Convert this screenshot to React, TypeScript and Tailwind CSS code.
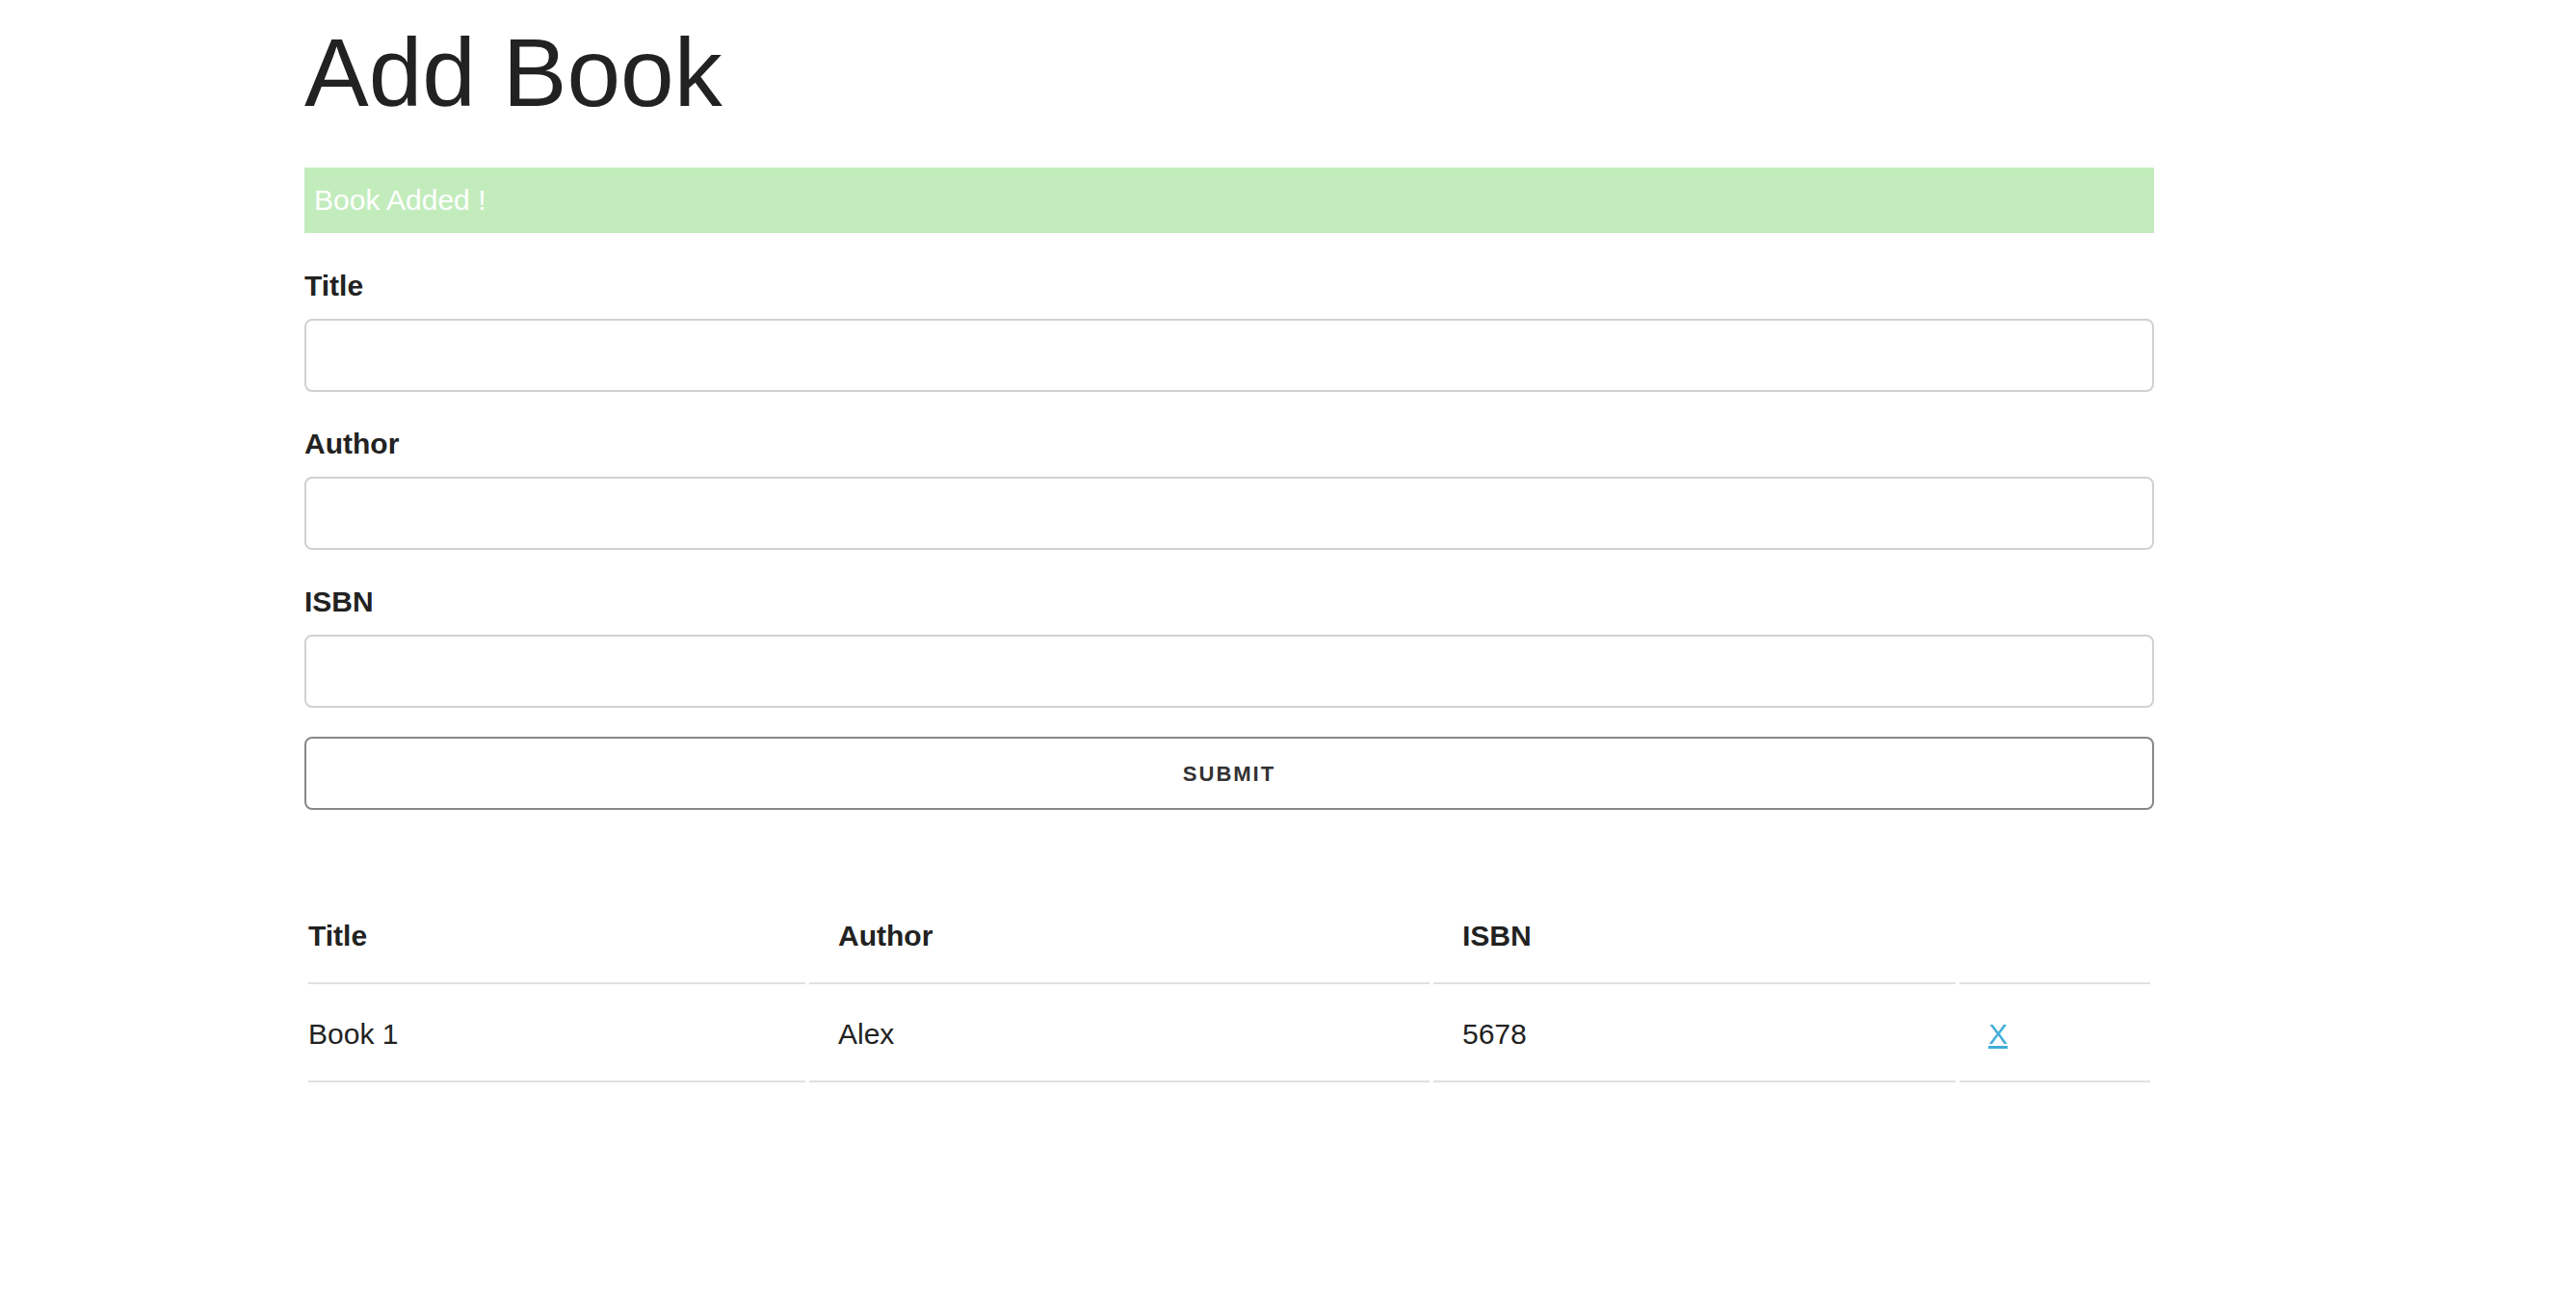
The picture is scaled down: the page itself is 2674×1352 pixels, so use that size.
import React from "react";

const font = { fontFamily: '"Liberation Sans", Arial, Helvetica, sans-serif' };

function Field({ label }: { label: string }) {
  return (
    <div className="mb-[30px]">
      <label className="block mb-[10px] text-[30px] leading-[48px] font-bold text-[#222]">{label}</label>
      <input
        type="text"
        className="block w-full h-[76px] border-2 border-[#d1d1d1] rounded-[8px] bg-white px-[20px] text-[30px] outline-none"
      />
    </div>
  );
}

export default function App() {
  return (
    <div className="min-h-screen bg-white text-[#222]" style={font}>
      <div className="ml-[316px] w-[1920px] pt-[15px]">
        <h1 className="text-[100px] leading-[120px] font-normal text-[#222] mb-[39px]">Add Book</h1>
        <div className="bg-[#c3ecbd] text-white text-[30px] leading-[48px] py-[10px] px-[10px] mb-[31px]">
          Book Added !
        </div>
        <form onSubmit={(e) => e.preventDefault()}>
          <Field label="Title" />
          <Field label="Author" />
          <Field label="ISBN" />
          <button
            type="submit"
            className="w-full h-[76px] flex items-center justify-center border-2 border-[#888] rounded-[8px] bg-transparent text-[22px] font-bold tracking-[2px] text-[#333] uppercase"
          >
            Submit
          </button>
        </form>
        <table className="mt-[79px] w-[1920px] table-fixed border-separate border-spacing-[4px] -mx-0">
          <thead>
            <tr>
              <th className="w-[516px] text-left text-[30px] leading-[48px] font-bold py-[24px] pl-0 pr-[30px] border-b-2 border-[#e1e1e1]">Title</th>
              <th className="w-[644px] text-left text-[30px] leading-[48px] font-bold py-[24px] px-[30px] border-b-2 border-[#e1e1e1]">Author</th>
              <th className="w-[542px] text-left text-[30px] leading-[48px] font-bold py-[24px] px-[30px] border-b-2 border-[#e1e1e1]">ISBN</th>
              <th className="w-[198px] text-left text-[30px] leading-[48px] font-bold py-[24px] pl-[30px] pr-0 border-b-2 border-[#e1e1e1]"></th>
            </tr>
          </thead>
          <tbody>
            <tr>
              <td className="text-left text-[30px] leading-[48px] py-[24px] pl-0 pr-[30px] border-b-2 border-[#e1e1e1]">Book 1</td>
              <td className="text-left text-[30px] leading-[48px] py-[24px] px-[30px] border-b-2 border-[#e1e1e1]">Alex</td>
              <td className="text-left text-[30px] leading-[48px] py-[24px] px-[30px] border-b-2 border-[#e1e1e1]">5678</td>
              <td className="text-left text-[30px] leading-[48px] py-[24px] pl-[30px] pr-0 border-b-2 border-[#e1e1e1]">
                <a href="#" className="text-[#3fadd9] underline">X</a>
              </td>
            </tr>
          </tbody>
        </table>
      </div>
    </div>
  );
}
